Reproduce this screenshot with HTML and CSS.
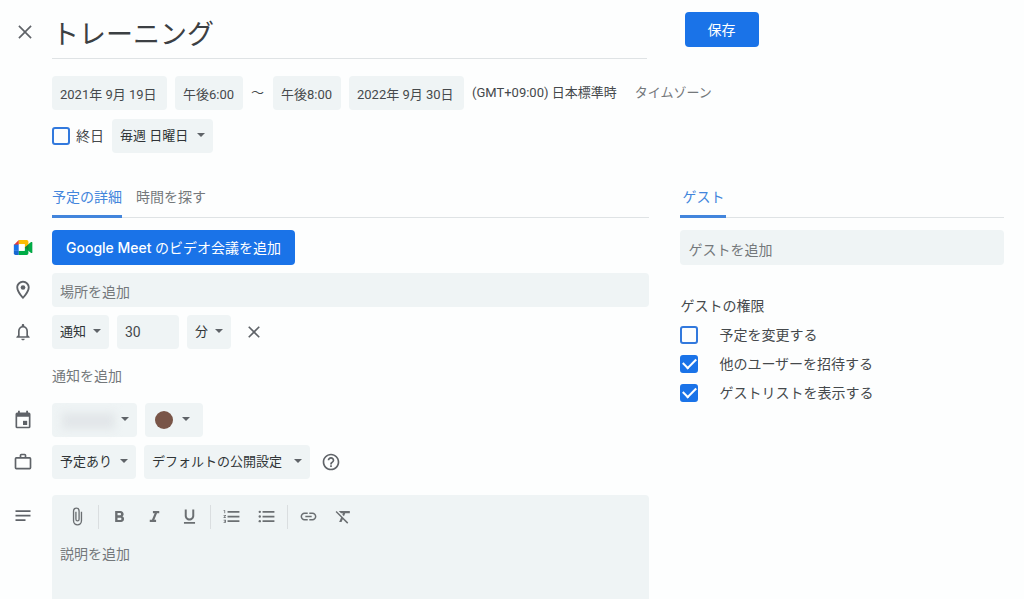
FILE: index.html
```
<!DOCTYPE html>
<html lang="ja">
<head>
<meta charset="utf-8">
<meta name="viewport" content="width=device-width, initial-scale=1">
<title>トレーニング</title>
<link rel="stylesheet" href="styles.css">
</head>
<body>
<form class="page">
  <header class="header">
    <button type="button" class="icon-button close" aria-label="閉じる">
      <svg class="icon" viewBox="0 0 24 24"><path d="M20 5.400 18.600 4 12 10.600 5.400 4 4 5.400l6.600 6.600L4 18.600 5.400 20l6.600-6.600 6.600 6.600 1.400-1.400-6.600-6.600z"/></svg>
    </button>
    <input class="title" type="text" aria-label="タイトル" value="トレーニング">
    <div class="save-area"><button type="submit" class="primary save">保存</button></div>
  </header>

  <section class="schedule">
    <div class="line dates">
      <input class="field date" type="text" aria-label="開始日" value="2021年 9月 19日">
      <input class="field time" type="text" aria-label="開始時刻" value="午後6:00">
      <span class="tilde">～</span>
      <input class="field time" type="text" aria-label="終了時刻" value="午後8:00">
      <input class="field date" type="text" aria-label="終了日" value="2022年 9月 30日">
      <span class="zone">(GMT+09:00) 日本標準時</span>
      <button type="button" class="text-button zone-button">タイムゾーン</button>
    </div>
    <div class="line">
      <label class="all-day"><input class="check" type="checkbox">終日</label>
      <span class="select repeat"><select aria-label="繰り返し"><option>毎週 日曜日</option></select></span>
    </div>
  </section>

  <div class="columns">
    <main class="details">
      <nav class="tabs">
        <button type="button" class="tab active">予定の詳細</button>
        <button type="button" class="tab">時間を探す</button>
      </nav>

      <div class="row">
        <svg class="icon meet" viewBox="0 0 24 20">
          <path fill="#e53935" d="M1 7 7 1v6z"/>
          <path fill="#fbbc04" d="M7 1h9.5a2 2 0 0 1 2 2v4.5L14 11V6H7z"/>
          <path fill="#1a73e8" d="M1 6.500h6v7.500H1z"/>
          <path fill="#1967d2" d="M1 14h6v5H3a2 2 0 0 1-2-2z"/>
          <path fill="#00ac47" d="M7 14h7v-4l4.500-3v10a2 2 0 0 1-2 2H7z"/>
          <path fill="#188038" d="m14 10 8-6.500q1-.5 1 .5v12q0 1-1 .5z"/>
          <path fill="#00ac47" d="m18.500 6.300 3.500-2.800q1-.5 1 .5v12q0 1-1 .5l-3.500-2.800z"/>
          <path fill="#fff" d="M7 6h7v8H7z"/>
        </svg>
        <button type="button" class="primary meet-button"><span class="brand">Google Meet</span> のビデオ会議を追加</button>
      </div>

      <div class="row">
        <svg class="icon" viewBox="0 0 24 24"><path d="M12 1C7.600 1 4 4.600 4 9c0 6 8 14 8 14s8-8 8-14c0-4.400-3.600-8-8-8zm0 2.200c3.200 0 5.800 2.600 5.800 5.800 0 3-2.900 7.400-5.800 10.700C9.100 16.400 6.200 12 6.200 9c0-3.200 2.600-5.800 5.800-5.800z"/><circle cx="12" cy="9" r="2.800"/></svg>
        <input class="field wide" type="text" aria-label="場所" placeholder="場所を追加">
      </div>

      <div class="row">
        <svg class="icon" viewBox="0 0 24 24"><path d="M12 22c1.100 0 2-.9 2-2h-4c0 1.100.9 2 2 2zm6-6v-5c0-3.070-1.630-5.640-4.500-6.320V4c0-.83-.67-1.500-1.500-1.500s-1.500.67-1.500 1.500v.68C7.640 5.360 6 7.920 6 11v5l-2 2v1h16v-1l-2-2zm-2 1H8v-6c0-2.480 1.510-4.500 4-4.500s4 2.020 4 4.500v6z"/></svg>
        <div class="line">
          <span class="select method"><select aria-label="通知方法"><option>通知</option></select></span>
          <input class="field amount" type="text" aria-label="通知までの時間" value="30">
          <span class="select unit"><select aria-label="単位"><option>分</option></select></span>
          <button type="button" class="icon-button remove" aria-label="通知を削除">
            <svg class="icon" viewBox="0 0 24 24"><path d="M19 6.400 17.600 5 12 10.600 6.400 5 5 6.400l5.600 5.600L5 17.600 6.400 19l5.600-5.600 5.600 5.600 1.400-1.400-5.600-5.600z"/></svg>
          </button>
        </div>
      </div>

      <div class="row add-row">
        <button type="button" class="text-button add-notice">通知を追加</button>
      </div>

      <div class="row">
        <svg class="icon" viewBox="0 0 24 24"><path d="M19 3h-1V1h-2.200v2H8.200V1H6v2H5a2 2 0 0 0-2 2v15a2 2 0 0 0 2 2h14a2 2 0 0 0 2-2V5a2 2 0 0 0-2-2zm0 17H5V8h14z"/><path d="M12 13h5v5h-5z"/></svg>
        <div class="line">
          <span class="select calendar"><select aria-label="カレンダー"><option></option></select><span class="smudge"></span></span>
          <span class="select color"><select aria-label="色"><option></option></select><span class="dot"></span></span>
        </div>
      </div>

      <div class="row">
        <svg class="icon" viewBox="0 0 24 24"><path d="M20 6h-4V4a2 2 0 0 0-2-2h-4a2 2 0 0 0-2 2v2H4a2 2 0 0 0-2 2v11a2 2 0 0 0 2 2h16a2 2 0 0 0 2-2V8a2 2 0 0 0-2-2zM10 4h4v2h-4zm10 15H4V8h16z"/></svg>
        <div class="line">
          <span class="select status"><select aria-label="予定の有無"><option>予定あり</option></select></span>
          <span class="select privacy"><select aria-label="公開設定"><option>デフォルトの公開設定</option></select></span>
          <button type="button" class="icon-button help" aria-label="ヘルプ">
            <svg class="icon" viewBox="0 0 24 24"><path d="M11 18h2v-2h-2v2zm1-16C6.480 2 2 6.480 2 12s4.480 10 10 10 10-4.480 10-10S17.520 2 12 2zm0 18c-4.410 0-8-3.590-8-8s3.590-8 8-8 8 3.590 8 8-3.590 8-8 8zm0-14c-2.210 0-4 1.790-4 4h2c0-1.100.9-2 2-2s2 .9 2 2c0 2-3 1.750-3 5h2c0-2.250 3-2.500 3-5 0-2.210-1.790-4-4-4z"/></svg>
          </button>
        </div>
      </div>

      <div class="row description-row">
        <svg class="icon" viewBox="0 0 24 24"><path d="M3 5h18v2.200H3zM3 10.400h18v2.200H3zM3 15.800h12V18H3z"/></svg>
        <div class="editor">
          <div class="toolbar" role="toolbar" aria-label="書式">
            <button type="button" class="tool" aria-label="添付"><svg class="icon" viewBox="0 0 24 24"><path d="M17 6v11.500a5 5 0 0 1-10 0V5a3.500 3.500 0 0 1 7 0v10.500a2 2 0 0 1-4 0V6" fill="none" stroke="currentColor" stroke-width="1.700"/></svg></button>
            <span class="divider"></span>
            <button type="button" class="tool" aria-label="太字"><svg class="icon" viewBox="0 0 24 24"><path d="M15.600 11.790c.97-.67 1.650-1.770 1.650-2.790 0-2.260-1.750-4-4-4H6.500v14h7.540c2.090 0 3.710-1.700 3.710-3.790 0-1.520-.86-2.820-2.150-3.420zM9.500 7.500h3c.83 0 1.500.67 1.500 1.500s-.67 1.500-1.500 1.500h-3v-3zm3.500 9H9.500v-3H13c.83 0 1.500.67 1.500 1.500s-.67 1.500-1.500 1.500z"/></svg></button>
            <button type="button" class="tool" aria-label="斜体"><svg class="icon" viewBox="0 0 24 24"><path d="M10 5v3h2.210l-3.420 8H6v3h8v-3h-2.210l3.420-8H18V5z"/></svg></button>
            <button type="button" class="tool" aria-label="下線"><svg class="icon" viewBox="0 0 24 24"><path d="M12 17c3.310 0 6-2.690 6-6V3h-2.500v8c0 1.930-1.570 3.500-3.500 3.500S8.500 12.930 8.500 11V3H6v8c0 3.310 2.690 6 6 6zm-7 2v2h14v-2H5z"/></svg></button>
            <span class="divider"></span>
            <button type="button" class="tool" aria-label="番号付きリスト"><svg class="icon" viewBox="0 0 24 24"><path d="M2 17h2v.5H3v1h1v.5H2v1h3v-4H2v1zm1-9h1V4H2v1h1v3zm-1 3h1.800L2 13.100v.9h3v-1H3.200L5 10.900V10H2v1zm5-6v2.300h15V5H7zm0 14h15v-2.300H7V19zm0-5.800h15v-2.300H7v2.300z"/></svg></button>
            <button type="button" class="tool" aria-label="箇条書き"><svg class="icon" viewBox="0 0 24 24"><path d="M7 5h15v2.300H7zM7 10.900h15v2.300H7zM7 16.700h15V19H7z"/><circle cx="3.500" cy="6.100" r="1.500"/><circle cx="3.500" cy="12" r="1.500"/><circle cx="3.500" cy="17.900" r="1.500"/></svg></button>
            <span class="divider"></span>
            <button type="button" class="tool" aria-label="リンク"><svg class="icon" viewBox="0 0 24 24"><path d="M3.900 12c0-1.710 1.390-3.100 3.100-3.100h4V7H7c-2.760 0-5 2.240-5 5s2.240 5 5 5h4v-1.900H7c-1.710 0-3.100-1.390-3.100-3.100zM8 13h8v-2H8v2zm9-6h-4v1.900h4c1.710 0 3.100 1.390 3.100 3.100s-1.390 3.100-3.100 3.100h-4V17h4c2.760 0 5-2.240 5-5s-2.240-5-5-5z"/></svg></button>
            <button type="button" class="tool" aria-label="書式をクリア"><svg class="icon" viewBox="0 0 24 24"><path d="M3.270 5 2 6.270l6.970 6.970L6.500 19h3l1.570-3.660L16.730 21 18 19.730 3.550 5.270 3.270 5zM6 5v.18L8.820 8h2.400l-.72 1.680 2.100 2.100L14.210 8H20V5H6z"/></svg></button>
          </div>
          <textarea class="description" aria-label="説明" placeholder="説明を追加"></textarea>
        </div>
      </div>
    </main>

    <aside class="guests">
      <nav class="tabs">
        <button type="button" class="tab active guest-tab">ゲスト</button>
      </nav>
      <input class="field wide" type="text" aria-label="ゲスト" placeholder="ゲストを追加">
      <fieldset class="permissions">
        <legend>ゲストの権限</legend>
        <label class="permission"><input class="check" type="checkbox">予定を変更する</label>
        <label class="permission"><input class="check" type="checkbox" checked>他のユーザーを招待する</label>
        <label class="permission"><input class="check" type="checkbox" checked>ゲストリストを表示する</label>
      </fieldset>
    </aside>
  </div>
</form>
</body>
</html>
```

FILE: styles.css
```
:root {
  --blue: #1a73e8;
  --tab-blue: #4285dc;
  --fill: #eff4f5;
  --ink: #45494c;
  --muted: #74787b;
  --rule: #dfe3e5;
  --gutter: 52px;
}

* { box-sizing: border-box; }

body {
  margin: 0;
  background: #fdfefe;
  color: var(--ink);
  font: 14px/20px Roboto, "Noto Sans CJK JP", sans-serif;
}

button, input, select, textarea {
  margin: 0;
  border: 0;
  color: inherit;
  font: inherit;
}

button { padding: 0; background: none; cursor: pointer; }

::placeholder { color: var(--muted); opacity: 1; }

.icon {
  display: block;
  width: 20px;
  height: 20px;
  fill: currentColor;
  flex: none;
}

.page {
  display: flex;
  flex-direction: column;
  min-height: 100vh;
  padding-right: 20px;
}

.header {
  display: grid;
  grid-template-columns: var(--gutter) minmax(0, 24fr) minmax(0, 13fr);
  align-items: start;
  padding-top: 12px;
}

.icon-button { display: grid; place-items: center; color: #5f6368; }

.close { width: 50px; height: 40px; }

.title {
  width: calc(100% - 23px);
  height: 47px;
  padding: 0 0 6px;
  border-bottom: 1px solid var(--rule);
  background: none;
  color: #3c4043;
  font-size: 27px;
}

.save-area { padding-left: 15px; }

.primary {
  height: 35px;
  border-radius: 4px;
  background: var(--blue);
  color: #fff;
}

.save { width: 74px; }

.schedule {
  display: flex;
  flex-direction: column;
  gap: 9px;
  padding: 17px 0 0 var(--gutter);
}

.line { display: flex; align-items: center; gap: 8px; }

.dates { font-size: 13px; white-space: nowrap; }

.field {
  height: 34px;
  padding: 0 8px;
  border-radius: 4px;
  background: var(--fill);
}

.date { width: 115px; }
.time { width: 68px; }
.wide { width: 100%; padding-top: 4px; }
.amount { width: 62px; }
.tilde { width: 14px; }

.text-button { color: var(--muted); }
.zone-button { margin-left: 10px; }

.select {
  position: relative;
  display: flex;
  border-radius: 4px;
  background: var(--fill);
  color: #303437;
  font-size: 13px;
}

.select select {
  appearance: none;
  width: 100%;
  height: 34px;
  padding: 0 8px;
  background: none;
}

.select::after {
  content: "";
  position: absolute;
  top: 14px;
  right: 8px;
  border: 4px solid transparent;
  border-top-color: #5f6368;
  border-bottom: 0;
  pointer-events: none;
}

.repeat { width: 101px; }
.method { width: 57px; }
.unit { width: 44px; }
.calendar { width: 85px; }
.color { width: 58px; }
.color::after { right: 13px; }
.status { width: 84px; }
.privacy { width: 166px; }

.smudge {
  position: absolute;
  inset: 10px 22px 8px 10px;
  background: #e2e6e9;
  filter: blur(4px);
}

.dot {
  position: absolute;
  top: 8px;
  left: 10px;
  width: 18px;
  height: 18px;
  border-radius: 50%;
  background: #795548;
}

.check {
  appearance: none;
  display: grid;
  place-items: center;
  width: 18px;
  height: 18px;
  border: 2px solid #3279dd;
  border-radius: 3px;
  flex: none;
}

.check:checked { border-color: var(--blue); background: var(--blue); }

.check:checked::after {
  content: "";
  width: 11px;
  height: 6px;
  margin-bottom: 3px;
  border: solid #fff;
  border-width: 0 0 2px 2px;
  rotate: -45deg;
}

.all-day { display: flex; align-items: center; gap: 6px; }

.columns {
  display: grid;
  grid-template-columns: minmax(0, 24fr) minmax(0, 13fr);
  column-gap: 31px;
  flex: 1;
  padding: 29px 0 0 var(--gutter);
}

.details { display: flex; flex-direction: column; gap: 8px; }

.tabs {
  display: flex;
  gap: 14px;
  height: 36px;
  margin-bottom: 4px;
  border-bottom: 1px solid var(--rule);
}

.tab {
  height: 36px;
  padding-bottom: 6px;
  color: var(--muted);
}

.active {
  padding-bottom: 3px;
  border-bottom: 3px solid var(--tab-blue);
  border-radius: 2px 2px 0 0;
  color: var(--tab-blue);
}

.guest-tab { padding-right: 2px; padding-left: 2px; }

.row {
  display: grid;
  grid-template-columns: var(--gutter) minmax(0, 1fr);
  align-items: center;
  min-height: 34px;
  margin-left: calc(-1 * var(--gutter));
}

.row > .icon { margin-left: 13px; color: #5f6368; }
.row > .meet { height: 17px; }

.meet-button {
  justify-self: start;
  padding: 0 14px;
}

.brand { font-family: Inter, sans-serif; font-weight: 500; }

.remove, .help { width: 30px; height: 34px; }
.help { width: 26px; }

.add-row { min-height: 38px; }
.add-notice { grid-column: 2; justify-self: start; }

.description-row { flex: 1; align-items: stretch; margin-top: 8px; }
.description-row > .icon { margin-top: 11px; }

.editor {
  display: flex;
  flex-direction: column;
  padding: 4px 8px 0;
  border-radius: 4px 4px 0 0;
  background: var(--fill);
}

.toolbar { display: flex; align-items: center; }

.tool {
  display: grid;
  place-items: center;
  width: 35px;
  height: 35px;
  color: #6b6f72;
}

.tool .icon { width: 19px; height: 19px; }

.divider {
  width: 1px;
  height: 24px;
  margin: 0 3px;
  background: #dadee0;
}

.description {
  flex: 1;
  width: 100%;
  min-height: 40px;
  padding: 10px 0 0;
  background: none;
  resize: none;
}

.guests { padding-bottom: 20px; }
.guests .tabs { margin-bottom: 12px; }
.guests .wide { height: 35px; }

.permissions { margin: 31px 0 0; padding: 0; border: 0; }
.permissions legend { padding: 0; margin-bottom: 4px; }

.permission {
  display: flex;
  align-items: center;
  gap: 21px;
  min-height: 29px;
}
```
